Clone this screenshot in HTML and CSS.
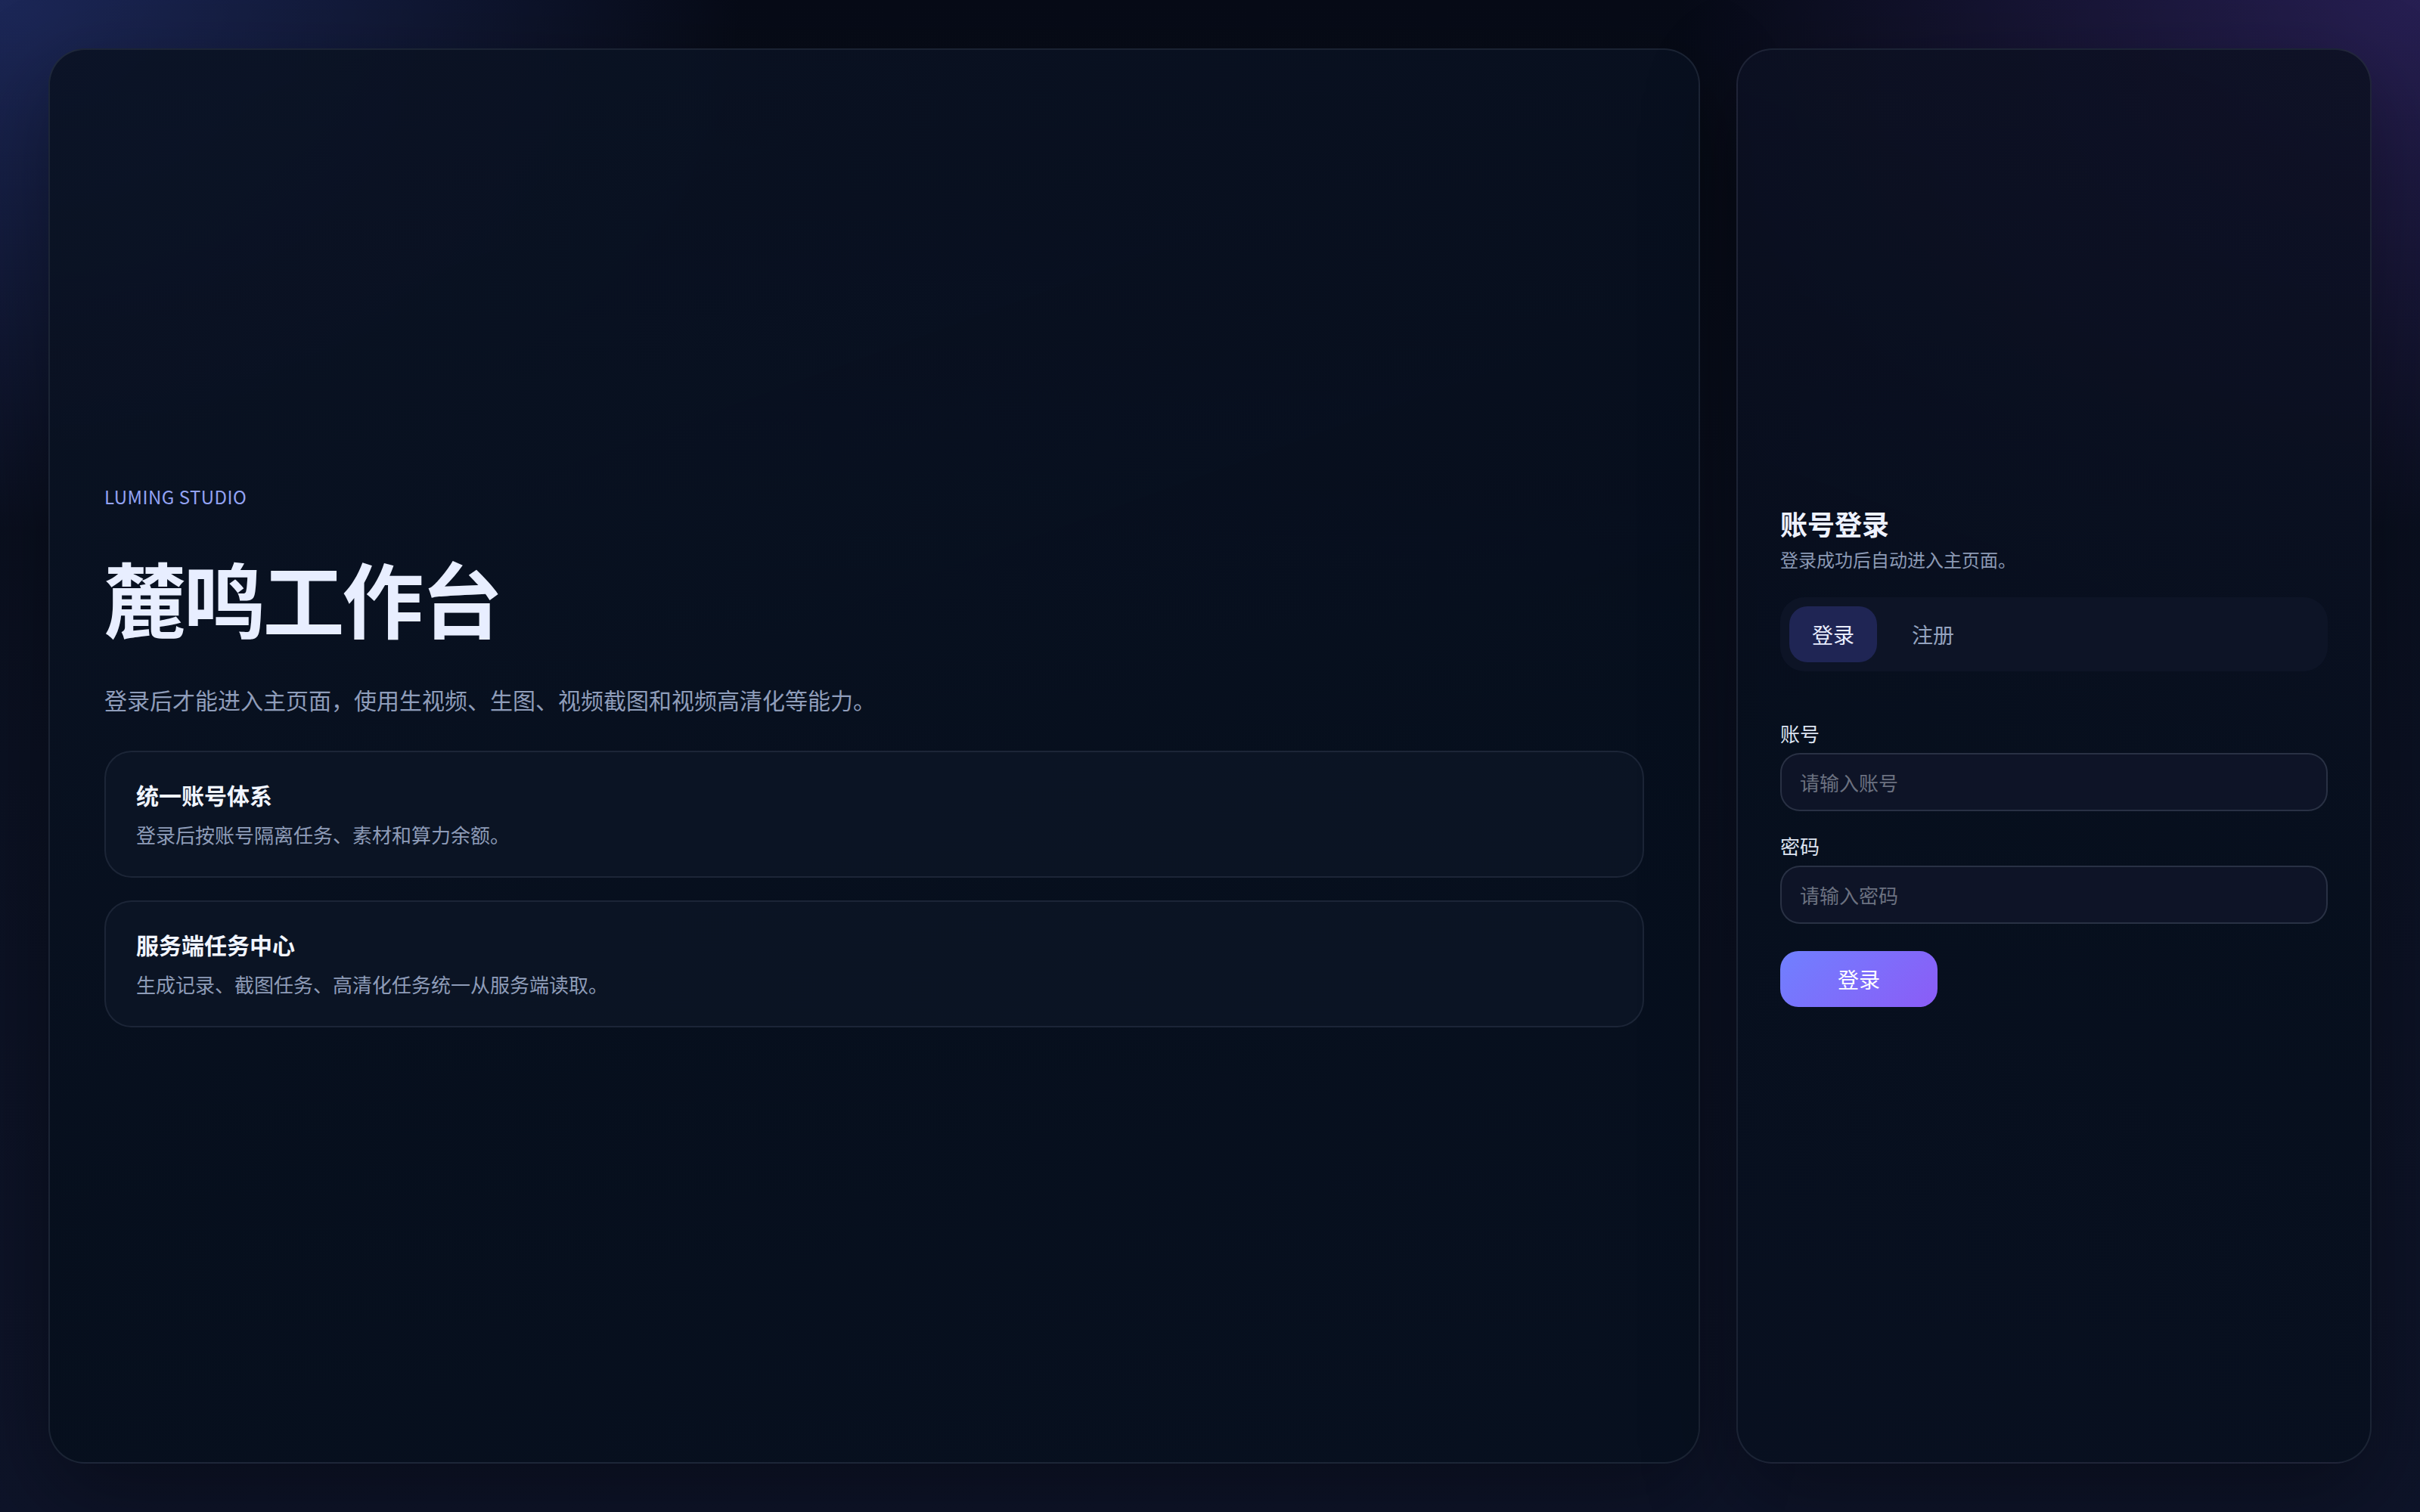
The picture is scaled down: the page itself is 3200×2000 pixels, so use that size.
FILE: index.html
```html
<!DOCTYPE html>
<html lang="zh-CN">
<head>
<meta charset="utf-8">
<title>麓鸣工作台</title>
<link rel="stylesheet" href="styles.css">
</head>
<body>
<main class="shell">
  <section class="panel hero">
    <div class="hero-inner">
      <div class="eyebrow">LUMING STUDIO</div>
      <h1 class="hero-title">麓鸣工作台</h1>
      <p class="hero-sub">登录后才能进入主页面，使用生视频、生图、视频截图和视频高清化等能力。</p>
      <div class="features">
        <div class="feature">
          <div class="feature-title">统一账号体系</div>
          <div class="feature-desc">登录后按账号隔离任务、素材和算力余额。</div>
        </div>
        <div class="feature">
          <div class="feature-title">服务端任务中心</div>
          <div class="feature-desc">生成记录、截图任务、高清化任务统一从服务端读取。</div>
        </div>
      </div>
    </div>
  </section>
  <section class="panel auth">
    <div class="auth-inner">
      <h2 class="auth-title">账号登录</h2>
      <p class="auth-sub">登录成功后自动进入主页面。</p>
      <div class="tabs">
        <div class="tab active">登录</div>
        <div class="tab">注册</div>
      </div>
      <form class="form">
        <label class="field">
          <span class="label">账号</span>
          <input class="input" type="text" placeholder="请输入账号">
        </label>
        <label class="field">
          <span class="label">密码</span>
          <input class="input" type="password" placeholder="请输入密码">
        </label>
        <button class="submit" type="button">登录</button>
      </form>
    </div>
  </section>
</main>
</body>
</html>
```

FILE: styles.css
```css
* { box-sizing: border-box; }

html, body {
  margin: 0;
  height: 100%;
}

body {
  font-family: "Noto Sans CJK SC", "Noto Sans", sans-serif;
  color: #e6edff;
  background:
    radial-gradient(ellipse 1400px 1000px at 0% 0%, rgba(45, 62, 140, 0.55), rgba(45, 62, 140, 0) 70%),
    radial-gradient(ellipse 1400px 1000px at 100% 0%, rgba(70, 50, 140, 0.5), rgba(70, 50, 140, 0) 70%),
    linear-gradient(180deg, #070b17 0%, #0b1122 50%, #0e1429 100%);
}

.shell {
  height: 100%;
  padding: 64px;
  display: grid;
  grid-template-columns: 1fr 840px;
  gap: 48px;
}

.panel {
  border-radius: 48px;
  border: 2px solid rgba(148, 163, 184, 0.14);
  background: linear-gradient(160deg, rgba(11, 19, 36, 0.92) 0%, rgba(7, 15, 29, 0.94) 60%, rgba(8, 16, 31, 0.94) 100%);
  box-shadow: 0 40px 120px rgba(0, 0, 0, 0.35);
  display: flex;
  flex-direction: column;
  justify-content: center;
}

.auth {
  background: linear-gradient(200deg, rgba(14, 17, 36, 0.92) 0%, rgba(7, 15, 29, 0.94) 55%, rgba(9, 16, 32, 0.94) 100%);
}

.hero-inner {
  padding: 0 72px;
}

.eyebrow {
  font-size: 24px;
  line-height: 32px;
  letter-spacing: 0.02em;
  color: #93a3f4;
  margin-bottom: 56px;
}

.hero-title {
  margin: 0 0 52px;
  font-size: 108px;
  line-height: 120px;
  font-weight: 700;
  letter-spacing: -0.03em;
  color: #e8eeff;
}

.hero-sub {
  margin: 0 0 44px;
  font-size: 30px;
  line-height: 48px;
  color: #8f9dba;
}

.features {
  display: flex;
  flex-direction: column;
  gap: 30px;
}

.feature {
  border: 2px solid rgba(148, 163, 184, 0.13);
  border-radius: 36px;
  background: rgba(13, 21, 38, 0.8);
  padding: 35px 40px;
}

.feature-title {
  font-size: 30px;
  line-height: 42px;
  font-weight: 700;
  color: #f1f5ff;
  margin-bottom: 12px;
}

.feature-desc {
  font-size: 26px;
  line-height: 40px;
  color: #8e9cb8;
}

.auth-inner {
  padding: 0 56px;
}

.auth-title {
  margin: 0 0 7px;
  font-size: 36px;
  line-height: 46px;
  font-weight: 700;
  color: #eef2ff;
}

.auth-sub {
  margin: 0 0 32px;
  font-size: 24px;
  line-height: 36px;
  color: #8b99b4;
}

.tabs {
  display: flex;
  gap: 16px;
  padding: 12px;
  border-radius: 32px;
  background: rgba(14, 21, 40, 0.85);
}

.tab {
  height: 74px;
  line-height: 74px;
  padding: 0 30px;
  font-size: 28px;
  border-radius: 24px;
  color: #94a3bf;
}

.tab.active {
  background: #1f2554;
  color: #eaeeff;
}

.form {
  margin-top: 66px;
  display: flex;
  flex-direction: column;
  align-items: flex-start;
}

.field {
  display: flex;
  flex-direction: column;
  width: 100%;
  margin-bottom: 30px;
}

.field:last-of-type {
  margin-bottom: 36px;
}

.label {
  font-size: 26px;
  line-height: 32px;
  color: #dce3f0;
  margin-bottom: 10px;
}

.input {
  width: 100%;
  height: 77px;
  padding: 0 24px;
  border: 2px solid rgba(148, 163, 184, 0.2);
  border-radius: 26px;
  background: #0e1427;
  font-family: "Noto Sans CJK SC", "Noto Sans", sans-serif;
  font-size: 26px;
  color: #e6edff;
  outline: none;
}

.input::placeholder {
  color: #6b7180;
}

.submit {
  height: 74px;
  padding: 0 76px;
  border: none;
  border-radius: 24px;
  background: linear-gradient(135deg, #7080ff 0%, #8b5cf6 100%);
  font-family: "Noto Sans CJK SC", "Noto Sans", sans-serif;
  font-size: 28px;
  color: #ffffff;
}
```
